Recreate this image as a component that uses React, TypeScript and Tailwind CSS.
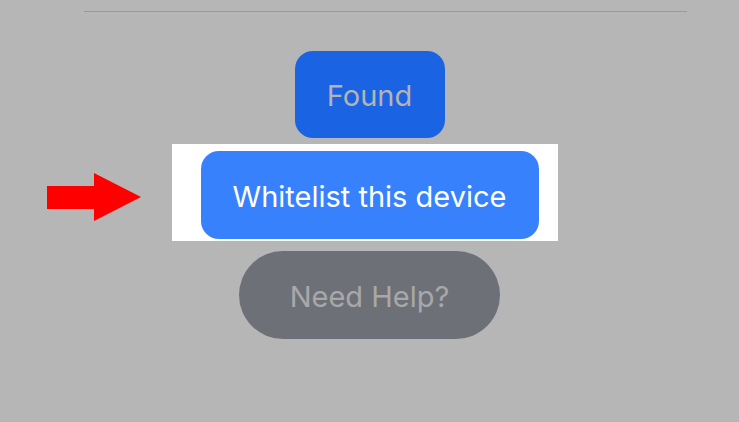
export default function App() {
  return (
    <div className="h-[422px] w-[739px] overflow-hidden bg-[#b6b6b6] font-['Inter',sans-serif]">
      <div className="ml-[84px] mt-[11px] h-px w-[603px] bg-[#9a9a9a]" />
      <div className="mt-[39px] flex flex-col items-center">
        <button className="flex h-[87px] w-[150px] items-center justify-center rounded-[18px] bg-[#1a63e3] pt-[3px] text-[29px] text-[#b4b4b4]">
          Found
        </button>
        <div className="relative mt-[6px] ml-[-10px]">
          <svg
            className="absolute left-[-125px] top-[29px]"
            width="94"
            height="49"
            viewBox="0 0 94 49"
          >
            <path d="M0 13 H47 V0 L94 24 L47 48 V36 H0 Z" fill="#ff0000" />
          </svg>
          <div className="flex h-[97px] w-[386px] items-start bg-white pl-[29px] pt-[7px]">
            <button className="flex h-[88px] w-[338px] items-center justify-center rounded-[18px] bg-[#3881fd] pt-[3px] text-[29px] text-white">
              Whitelist this device
            </button>
          </div>
        </div>
        <button className="mt-[10px] flex h-[88px] w-[261px] items-center justify-center rounded-full bg-[#6e7078] pt-[3px] text-[29px] text-[#a8a8a8]">
          Need Help?
        </button>
      </div>
    </div>
  );
}
